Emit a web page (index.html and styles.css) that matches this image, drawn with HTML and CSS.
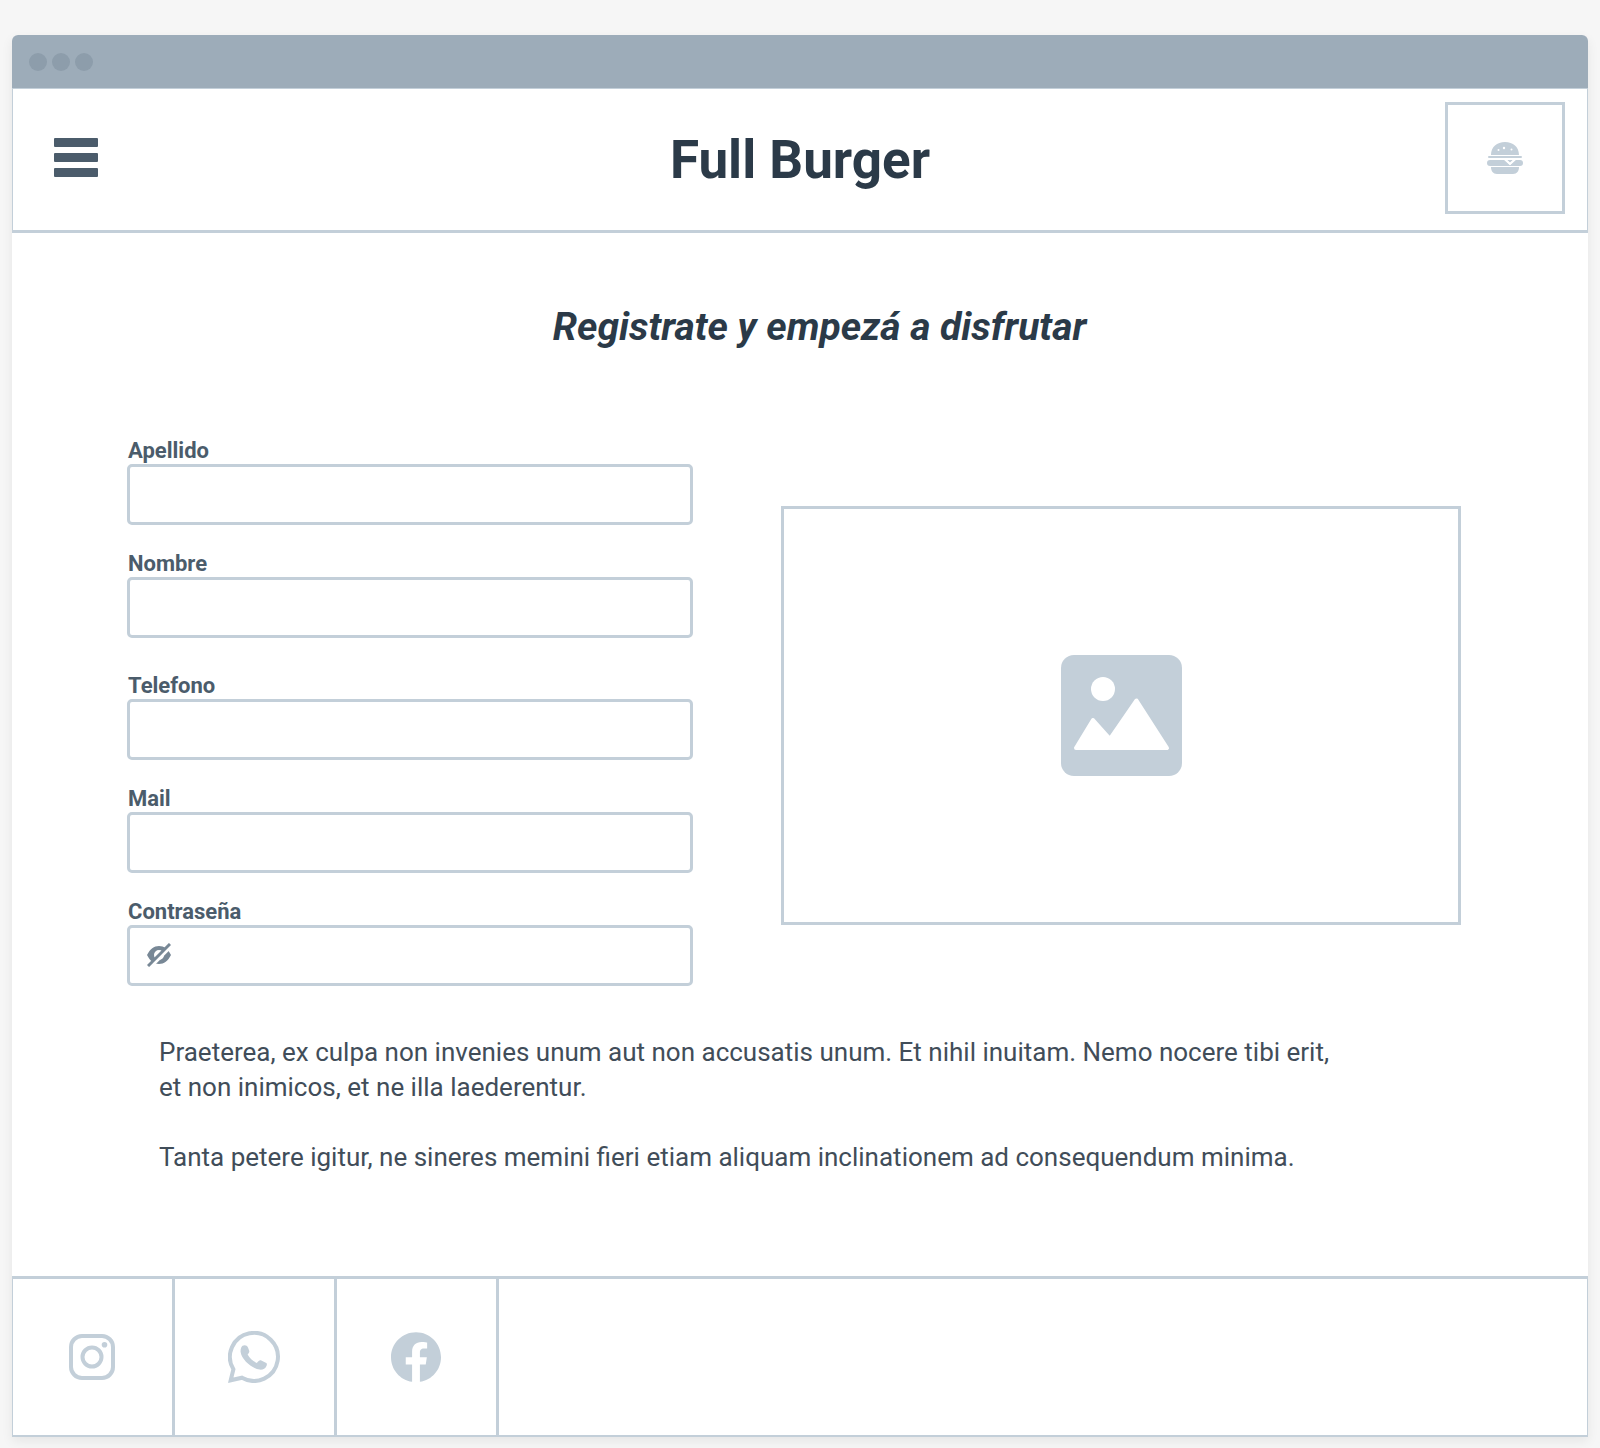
FILE: index.html
```html
<!DOCTYPE html>
<html lang="es">
<head>
<meta charset="utf-8">
<meta name="viewport" content="width=device-width, initial-scale=1">
<title>Full Burger</title>
<link rel="stylesheet" href="styles.css">
</head>
<body>
<div class="window">
  <div class="titlebar"><span class="dot"></span><span class="dot"></span><span class="dot"></span></div>
  <header class="header">
    <button class="menu" type="button" aria-label="Menú"><span class="bar"></span><span class="bar"></span><span class="bar"></span></button>
    <h1 class="brand">Full Burger</h1>
    <a class="logo" href="#" aria-label="Inicio">
      <svg width="36" height="32" viewBox="0 0 36 32">
        <path fill="currentColor" d="M4 13C4 5 10 0 18 0s14 5 14 13zM2 14h32a1 1 0 0 1 0 2H2a1 1 0 0 1 0-2zM3 18h15l5 5 5-5h5a3 3 0 0 1 0 6H3a3 3 0 0 1 0-6zM4 25h28c0 4-2 7-6 7H10c-4 0-6-3-6-7z"/>
        <path fill="currentColor" d="M20 18h6l-3 3z"/>
        <path class="cheese" d="M17.500 17l5.500 5 5.500-5"/>
        <g fill="#fff"><circle cx="11.500" cy="8" r="1"/><circle cx="17" cy="6" r="1.200"/><circle cx="24.500" cy="7.500" r="1"/></g>
      </svg>
    </a>
  </header>
  <main class="main">
    <h2 class="tagline">Registrate y empezá a disfrutar</h2>
    <div class="columns">
      <form class="form">
        <div class="group">
          <div class="field"><label for="apellido">Apellido</label><input id="apellido" type="text"></div>
          <div class="field"><label for="nombre">Nombre</label><input id="nombre" type="text"></div>
        </div>
        <div class="group">
          <div class="field"><label for="telefono">Telefono</label><input id="telefono" type="tel"></div>
          <div class="field"><label for="mail">Mail</label><input id="mail" type="email"></div>
          <div class="field">
            <label for="clave">Contraseña</label>
            <div class="secret">
              <input id="clave" type="password">
              <button class="toggle" type="button" aria-label="Mostrar contraseña">
                <svg width="24" height="24" viewBox="0 0 24 24">
                  <path fill="currentColor" fill-rule="evenodd" d="M0 12C3 6 7 3 12 3s9 3 12 9c-3 6-7 9-12 9S3 18 0 12zM12 7a5 5 0 1 0 0 10a5 5 0 0 0 0-10z"/>
                  <path class="gap" d="M3 24L26 1"/><path class="slash" d="M1 23L23 1"/>
                </svg>
              </button>
            </div>
          </div>
        </div>
      </form>
      <div class="picture">
        <svg width="121" height="121" viewBox="0 0 121 121" role="img" aria-label="Imagen">
          <rect width="121" height="121" rx="13" fill="currentColor"/>
          <circle cx="42" cy="34" r="12" fill="#fff"/>
          <path fill="#fff" stroke="#fff" stroke-width="4" stroke-linejoin="round" d="M15 93L32 65L49 84L75.500 45.500L106 93z"/>
        </svg>
      </div>
    </div>
    <div class="copy">
      <p>Praeterea, ex culpa non invenies unum aut non accusatis unum. Et nihil inuitam. Nemo nocere tibi erit, et non inimicos, et ne illa laederentur.</p>
      <p>Tanta petere igitur, ne sineres memini fieri etiam aliquam inclinationem ad consequendum minima.</p>
    </div>
  </main>
  <footer class="footer">
    <a class="social" href="#" aria-label="Instagram">
      <svg width="46" height="46" viewBox="0 0 46 46">
        <rect x="2" y="2" width="42" height="42" rx="11" fill="none" stroke="currentColor" stroke-width="4"/>
        <circle cx="23" cy="23" r="9.500" fill="none" stroke="currentColor" stroke-width="4"/>
        <circle cx="35.500" cy="10.700" r="2.800" fill="currentColor"/>
      </svg>
    </a>
    <a class="social" href="#" aria-label="WhatsApp">
      <svg width="52" height="52" viewBox="0 0 52 52">
        <path fill="none" stroke="currentColor" stroke-width="4" d="M2.700 49.300L5.400 38.300A24 24 0 1 1 14 46.700z"/>
        <path fill="currentColor" d="M14.500 14.800c2-1.200 4.500-.8 5.500 1.800l1.200 3.200c.4 1.200-.2 2-1.600 3.800 2.200 4 5.300 6.600 9.200 8.300 1.800-2 2.700-3 4-2.600l5 2.400c1.500.7 1.200 1.500.8 3-1 3-4 4.200-7 3.900-8-1-18-10-19-17.500-.2-2.500.4-5 1.900-6.300z"/>
      </svg>
    </a>
    <a class="social" href="#" aria-label="Facebook">
      <svg width="50" height="50" viewBox="0 0 24 24">
        <path fill="currentColor" d="M24 12.073c0-6.627-5.373-12-12-12s-12 5.373-12 12c0 5.990 4.388 10.954 10.125 11.854v-8.385H7.078v-3.470h3.047V9.430c0-3.007 1.792-4.669 4.533-4.669 1.312 0 2.686.235 2.686.235v2.953H15.830c-1.491 0-1.956.925-1.956 1.874v2.250h3.328l-.532 3.470h-2.796v8.385C19.612 23.027 24 18.062 24 12.073z"/>
      </svg>
    </a>
  </footer>
</div>
</body>
</html>
```
FILE: styles.css
```css
* { box-sizing: border-box; }
body {
  margin: 0;
  padding: 35px 12px 12px;
  background: #f6f6f6;
  color: #2b3a48;
  font-family: Roboto, "Liberation Sans", sans-serif;
}
h1, h2, p { margin: 0; }
svg { display: block; }
.window {
  background: #fff;
  border-radius: 6px 6px 0 0;
  box-shadow: 0 4px 12px rgba(0, 0, 0, 0.07);
}
.titlebar {
  display: flex;
  align-items: center;
  gap: 5px;
  height: 53px;
  padding: 0 17px;
  background: #9dacb9;
  border-radius: 6px 6px 0 0;
}
.dot {
  width: 18px;
  height: 18px;
  border-radius: 50%;
  background: #8d9dab;
}
.header {
  display: grid;
  grid-template-columns: 1fr auto 1fr;
  align-items: center;
  height: 145px;
  padding: 0 22px 4px;
  border: 1px solid #c3cfd9;
  border-bottom-width: 3px;
}
.menu {
  display: flex;
  flex-direction: column;
  justify-self: start;
  gap: 6px;
  margin-left: 19px;
  padding: 0;
  border: 0;
  background: none;
}
.bar {
  width: 44px;
  height: 9px;
  border-radius: 1px;
  background: #4b5c6b;
}
.brand {
  padding-top: 4px;
  font-size: 53px;
  line-height: 60px;
}
.logo {
  display: flex;
  align-items: center;
  justify-content: center;
  justify-self: end;
  width: 120px;
  height: 112px;
  border: 3px solid #c3cfd9;
  color: #c3cfd9;
}
.cheese {
  fill: none;
  stroke: #fff;
  stroke-width: 2px;
}
.main { padding: 72px 116px 101px 115px; }
.tagline {
  padding-left: 40px;
  font-size: 39px;
  font-style: italic;
  line-height: 44px;
  text-align: center;
}
.columns {
  display: grid;
  grid-template-columns: 566fr 680fr;
  align-items: center;
  gap: 88px;
  margin-top: 89px;
  padding-right: 11px;
}
.form, .group, .field {
  display: flex;
  flex-direction: column;
}
.form { gap: 35px; }
.group { gap: 26px; }
.field label {
  padding-left: 1px;
  color: #4b5c6b;
  font-size: 22px;
  font-weight: 700;
  line-height: 26px;
}
.field input {
  width: 100%;
  height: 61px;
  padding: 0 16px;
  border: 3px solid #c3cfd9;
  border-radius: 5px;
  background: #fff;
  color: #2b3a48;
  font: inherit;
  font-size: 22px;
}
.secret { position: relative; }
.field .secret input { padding-left: 56px; }
.toggle {
  position: absolute;
  top: 18px;
  left: 20px;
  padding: 0;
  border: 0;
  background: none;
  color: #788896;
}
.gap, .slash { fill: none; stroke: #fff; stroke-width: 4px; }
.slash { stroke: currentColor; stroke-width: 3px; }
.picture {
  display: flex;
  align-items: center;
  justify-content: center;
  height: 419px;
  margin-top: 6px;
  border: 3px solid #c3cfd9;
  color: #c3cfd9;
}
.copy {
  display: flex;
  flex-direction: column;
  gap: 35px;
  max-width: 1220px;
  margin-top: 49px;
  padding-left: 32px;
  color: #414d59;
  font-size: 26px;
  line-height: 35px;
}
.footer {
  display: flex;
  height: 161px;
  border: 1px solid #c3cfd9;
  border-top-width: 3px;
  border-bottom-width: 2px;
}
.social {
  display: flex;
  align-items: center;
  justify-content: center;
  width: 162px;
  padding-right: 2px;
  border-right: 3px solid #c3cfd9;
  color: #c3cfd9;
}
```
